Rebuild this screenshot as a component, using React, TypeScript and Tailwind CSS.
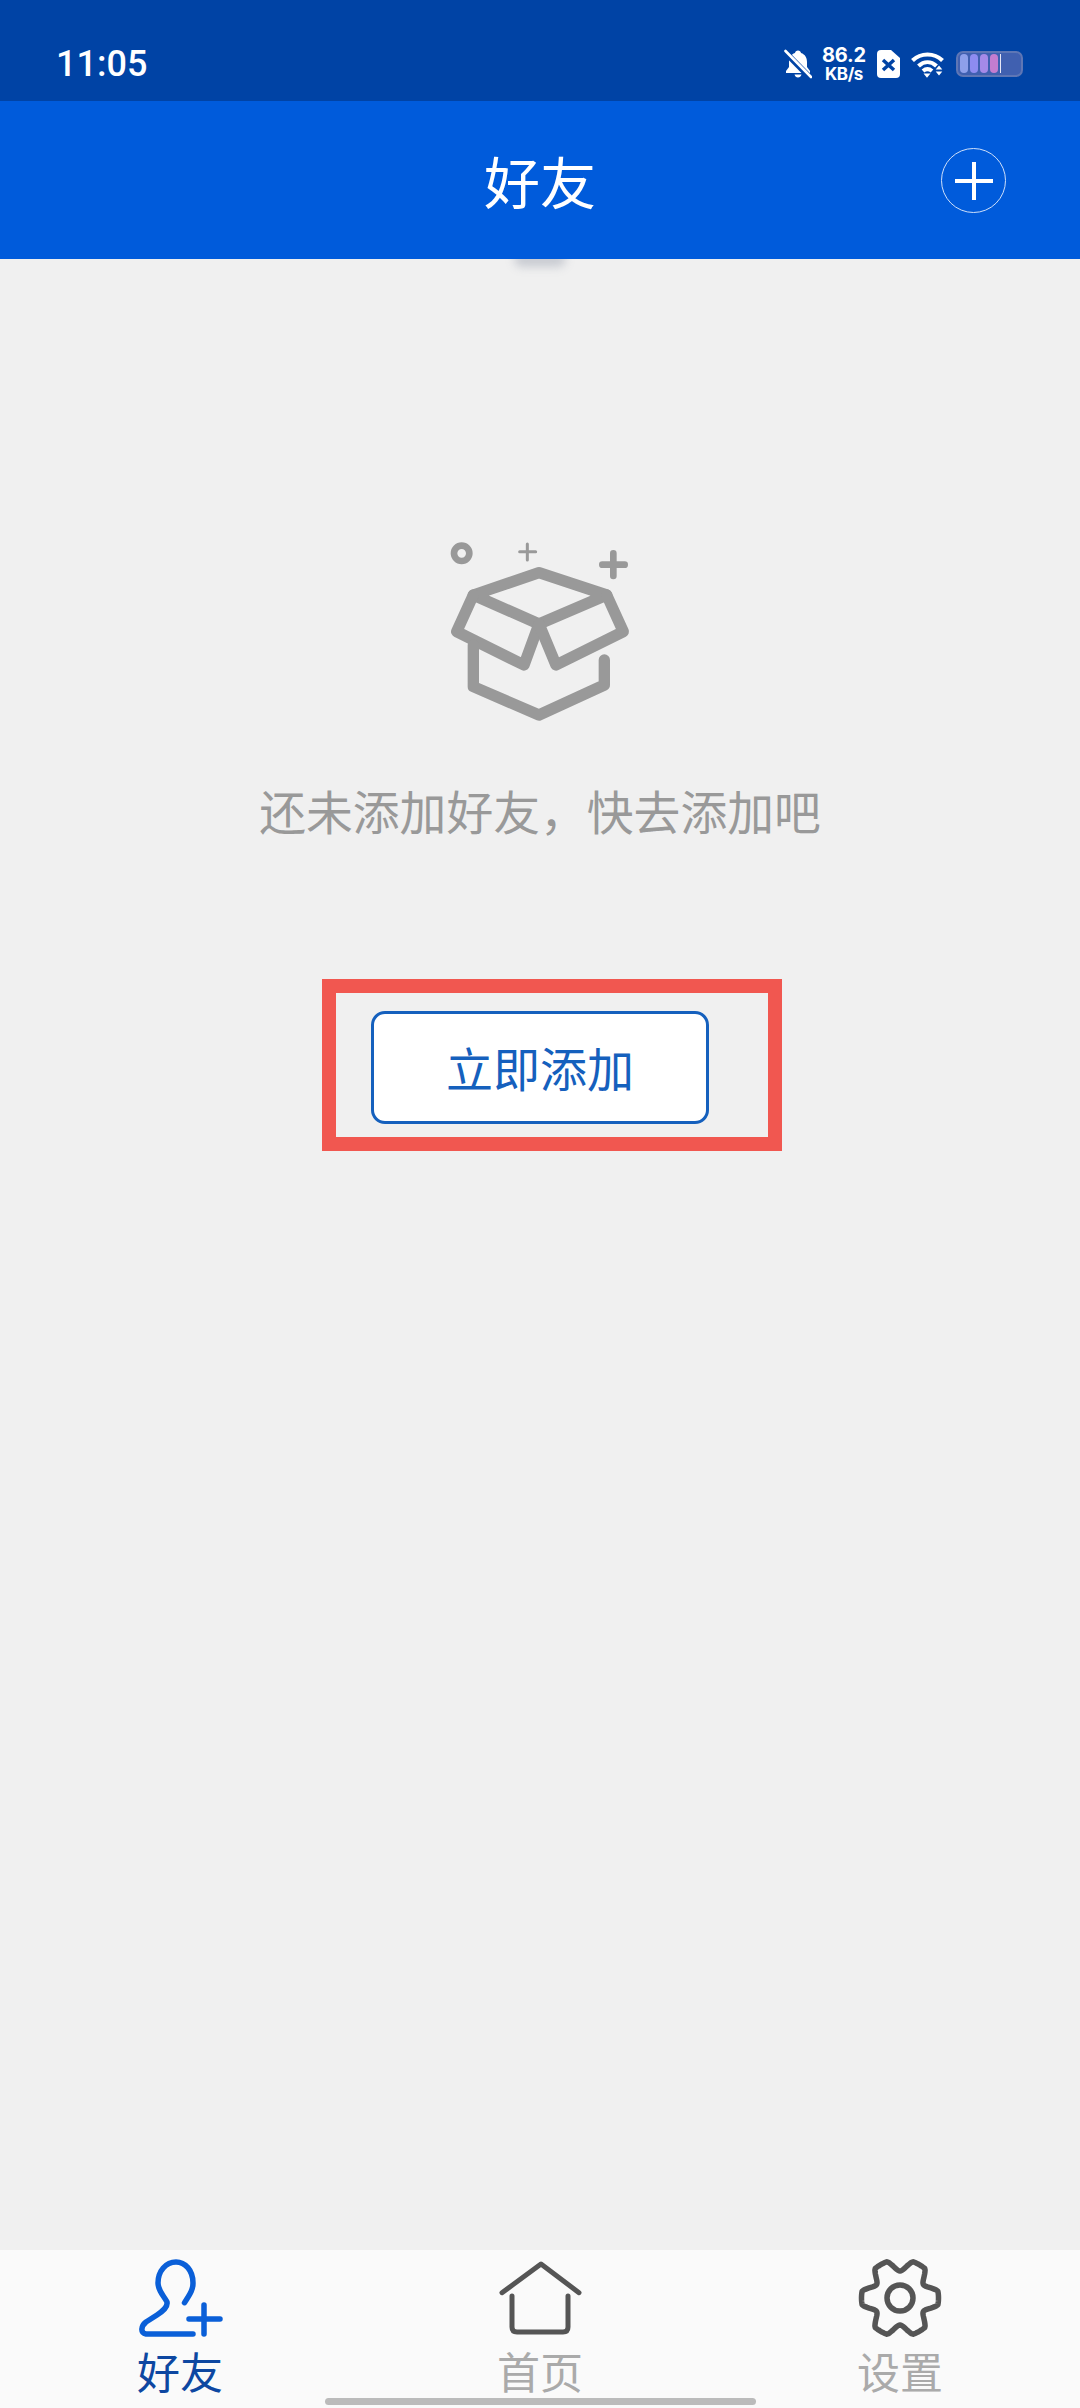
import React from "react";

const CJK = "font-['Noto_Sans_CJK_SC','Noto_Sans',sans-serif]";

// six rounded teeth, flat on top like the settings icon in the reference
const gearPath = () => {
  const points: string[] = [];
  for (let i = 0; i < 180; i++) {
    const t = (i / 180) * Math.PI * 2;
    const r = Math.min(35 + 8 * Math.cos(6 * t), 38.5);
    points.push(`${(45 + r * Math.cos(t)).toFixed(2)} ${(43 + r * Math.sin(t)).toFixed(2)}`);
  }
  return `M${points.join("L")}Z`;
};

const StatusIcons = () => (
  <div className="flex items-center">
    <svg width="28" height="30" viewBox="0 0 28 30">
      <path d="M14 1.500c-1.600 0-2.800 1.100-3 2.600C6.800 5.400 5 9 5 13v5l-3 4v2h24v-2l-3-4v-5c0-4-1.800-7.600-6-8.900-.2-1.500-1.400-2.600-3-2.600zM10.500 25.500c.5 1.900 1.800 3 3.500 3s3-1.100 3.500-3z" fill="#fff" />
      <path d="M1 3 26 28.500" stroke="#0043a5" strokeWidth="6" />
      <path d="M1.500 2 27 28" stroke="#fff" strokeWidth="2.600" strokeLinecap="round" />
    </svg>
    <div className="ml-[9px] flex w-[46px] flex-col items-center font-['Inter',sans-serif] font-bold text-white">
      <span className="text-[20px] leading-[20px] tracking-[-0.2px]">86.2</span>
      <span className="text-[17px] leading-[18px] tracking-[-0.4px]">KB/s</span>
    </div>
    <svg width="23" height="28" viewBox="0 0 23 28" className="ml-[10px]">
      <path d="M4 0h10l9 8v16a4 4 0 0 1-4 4H4a4 4 0 0 1-4-4V4a4 4 0 0 1 4-4z" fill="#fff" />
      <path d="M6 10l11 10M17 10 6 20" stroke="#0043a5" strokeWidth="3.500" />
    </svg>
    <svg width="34" height="28" viewBox="0 0 34 28" className="ml-[11px]">
      <g fill="none" stroke="#fff" strokeWidth="4.200">
        <path d="M1.500 10.500C10 2.500 23 2.500 31.500 10.500" />
        <path d="M7.500 16c5.500-5 12.500-5 18 0" />
        <path d="M12 21c3-2.500 6-2.500 9 0" />
      </g>
      <path d="M12.500 23.500h7l-3.500 4.300z" fill="#fff" />
      <path d="M28 15.500l3.300 4h-6.600zM24.700 21.500h6.600L28 25.500z" fill="#fff" />
    </svg>
    <div className="ml-[11px] flex h-[26px] w-[67px] items-center gap-[2px] rounded-[7px] border-[2px] border-[#5e76b5] bg-[#4060b0] px-[2px]">
      <span className="h-[19px] w-[8px] rounded-full bg-[#8ea0ea]" />
      <span className="h-[19px] w-[8px] rounded-full bg-[#8d8cf0]" />
      <span className="h-[19px] w-[8px] rounded-full bg-[#a58ae8]" />
      <span className="h-[19px] w-[8px] rounded-full bg-[#c47dd0]" />
      <span className="h-[19px] w-[1px] bg-[#e6e6f5]" />
    </div>
  </div>
);

const EmptyBox = () => (
  <svg width="240" height="210" viewBox="0 0 720 630" fill="none" stroke="#999999" strokeLinecap="round" strokeLinejoin="round">
    <circle cx="125" cy="100" r="23" strokeWidth="20" />
    <path d="M322 72v48M299 95h48" strokeWidth="9" />
    <path d="M580 100v68M547 134h67" strokeWidth="20" />
    <g strokeWidth="34">
      <path d="M357 158 160 225 357 312 560 225Z" />
      <path d="M160 225 110 335 312 435 357 312" />
      <path d="M560 225 610 335 408 435 357 312" />
      <path d="M160 375V500L357 585 553 495V420" />
    </g>
  </svg>
);

const TabItem = ({ label, active, children }: { label: string; active?: boolean; children: React.ReactNode }) => (
  <div className="flex flex-col items-center">
    {children}
    <span className={`${CJK} mt-[5px] text-[43px] leading-[50px] ${active ? "text-[#0d47a1]" : "text-[#aaaaaa]"}`}>{label}</span>
  </div>
);

export default function App() {
  return (
    <div className={`${CJK} relative flex h-[2408px] w-[1080px] flex-col overflow-hidden bg-[#f0f0f0]`}>
      <div className="flex h-[101px] items-center justify-between bg-[#0043a5] pl-[56px] pr-[57px] pt-[26px]">
        <span className="font-['Roboto',sans-serif] text-[36px] font-medium leading-none text-white">11:05</span>
        <StatusIcons />
      </div>

      <div className="relative flex h-[158px] items-center justify-center bg-[#005bdb]">
        <span className="text-[56px] leading-none text-white">好友</span>
        <div className="absolute right-[74px] top-[47px] flex h-[65px] w-[65px] items-center justify-center rounded-full border border-[#cfe0fa]">
          <svg width="40" height="40" viewBox="0 0 40 40">
            <path d="M20 1v38M1 20h38" stroke="#fff" strokeWidth="4" />
          </svg>
        </div>
      </div>

      <div className="relative flex flex-1 flex-col items-center overflow-hidden pt-[261px]">
        <div className="absolute left-[514px] top-[-8px] h-[16px] w-[52px] rounded-full bg-[#8f96a6] opacity-40 blur-[5px]" />
        <EmptyBox />
        <p className="mt-[45px] text-[46.800px] leading-[70px] text-[#999999]">还未添加好友，快去添加吧</p>
        <div className="relative mt-[166px]">
          <button type="button" className="h-[113px] w-[338px] rounded-[14px] border-[3px] border-[#1560bd] bg-white text-[47px] text-[#1560bd]">
            立即添加
          </button>
          <div className="absolute left-[-49px] top-[-32px] h-[172px] w-[460px] border-[14px] border-[#f15750]" />
        </div>
      </div>

      <div className="relative grid h-[158px] grid-cols-3 bg-[#fafafa] pt-[5px]">
        <TabItem label="好友" active>
          <svg width="90" height="85" viewBox="0 0 90 85" fill="none" stroke="#0a5fd8" strokeWidth="5.500" strokeLinecap="round" strokeLinejoin="round">
            <path d="M49.500 47.700C56 38 58 34 58 28 58 15 50 7 41 7 31 7 23 16 23 28c0 8 6 13 9 19 1 5-4 9-10 13L11 67c-5 4-6 11 0 12h47" />
            <path d="M54 64h31M69 50v29" />
          </svg>
        </TabItem>
        <TabItem label="首页">
          <svg width="90" height="85" viewBox="0 0 90 85" fill="none" stroke="#555555" strokeWidth="5" strokeLinecap="round" strokeLinejoin="round">
            <path d="M7 37.700 46 9l38 28.700" />
            <path d="M17 41v31q0 5 5 5h46q5 0 5-5V41" />
          </svg>
        </TabItem>
        <TabItem label="设置">
          <svg width="90" height="85" viewBox="0 0 90 85" fill="none" stroke="#555555" strokeWidth="5.500" strokeLinejoin="round">
            <path d={gearPath()} />
            <circle cx="45" cy="43" r="13" />
          </svg>
        </TabItem>
        <div className="absolute bottom-[3px] left-[325px] h-[7px] w-[431px] rounded-full bg-[#bbbbbb]" />
      </div>
    </div>
  );
}
